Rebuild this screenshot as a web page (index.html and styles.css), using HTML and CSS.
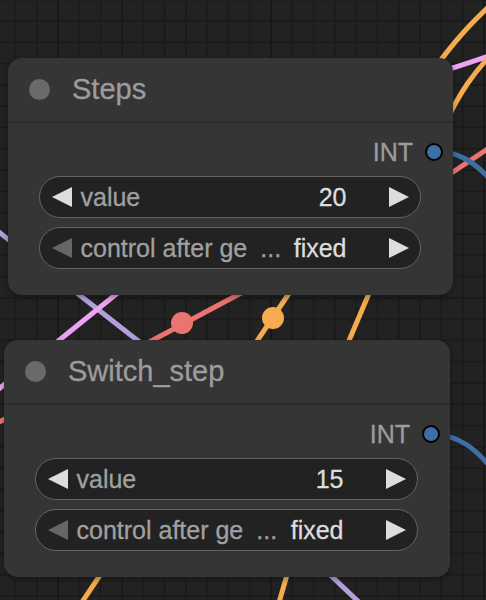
FILE: index.html
```html
<!DOCTYPE html>
<html lang="en">
<head>
    <meta charset="UTF-8">
    <meta name="viewport" content="width=device-width, initial-scale=1.0">
    <title>Steps</title>
    <link rel="stylesheet" href="styles.css">
</head>
<body>
    <div class="canvas">
        <!-- links between nodes -->
        <svg class="links" width="486" height="600" viewBox="0 0 486 600">
            <path class="link link-orange" d="M500 -4 C474 20, 454 40, 428 78"/>
            <path class="link link-pink" d="M440 72 C460 66, 474 61, 492 55"/>
            <path class="link link-orange" d="M494 52 C474 72, 460 92, 446 122"/>
            <path class="link link-red" d="M444 178 L492 146"/>
            <path class="link link-blue" d="M434 151 C458 151, 476 162, 496 186"/>
            <path class="link link-lavender" d="M-10 225 L160 358"/>
            <path class="link link-pink" d="M130 283 L-10 396"/>
            <path class="link link-red" d="M262 282 L-10 427"/>
            <circle class="dot-red" cx="182" cy="323" r="11"/>
            <path class="link link-orange" d="M300 277 L70 620"/>
            <circle class="dot-orange" cx="273" cy="318" r="11"/>
            <path class="link link-orange" d="M345 350 L373 284"/>
            <path class="link link-orange" d="M289 568 L278 606"/>
            <path class="link link-lavender" d="M325 570 L363 606"/>
            <path class="link link-blue" d="M430 434 C458 434, 476 448, 496 474"/>
        </svg>

        <!-- Steps -->
        <div class="node node-steps">
            <div class="node-title">
                <span class="title-dot"></span>
                <span class="title-text">Steps</span>
            </div>
            <div class="node-body">
                <div class="output-row">
                    <span class="slot-label">INT</span>
                    <span class="slot-dot"></span>
                </div>
                <div class="widget">
                    <span class="arrow arrow-left"></span>
                    <span class="w-label">value</span>
                    <span class="w-value">20</span>
                    <span class="arrow arrow-right"></span>
                </div>
                <div class="widget">
                    <span class="arrow arrow-left arrow-off"></span>
                    <span class="w-label">control after ge</span>
                    <span class="w-more">...</span>
                    <span class="w-value">fixed</span>
                    <span class="arrow arrow-right"></span>
                </div>
            </div>
        </div>

        <!-- Switch_step -->
        <div class="node node-switch">
            <div class="node-title">
                <span class="title-dot"></span>
                <span class="title-text">Switch_step</span>
            </div>
            <div class="node-body">
                <div class="output-row">
                    <span class="slot-label">INT</span>
                    <span class="slot-dot"></span>
                </div>
                <div class="widget">
                    <span class="arrow arrow-left"></span>
                    <span class="w-label">value</span>
                    <span class="w-value">15</span>
                    <span class="arrow arrow-right"></span>
                </div>
                <div class="widget">
                    <span class="arrow arrow-left arrow-off"></span>
                    <span class="w-label">control after ge</span>
                    <span class="w-more">...</span>
                    <span class="w-value">fixed</span>
                    <span class="arrow arrow-right"></span>
                </div>
            </div>
        </div>
    </div>
</body>
</html>
```

FILE: styles.css
```css
  body {
      margin: 0;
      padding: 0;
      background-color: #222222;
      font-family: 'Liberation Sans', Arial, Helvetica, sans-serif;
  }
  .canvas {
      position: relative;
      width: 486px;
      height: 600px;
      overflow: hidden;
      background-color: #222222;
      background-image:
          linear-gradient(90deg, #181818 2px, transparent 2px),
          linear-gradient(90deg, #1b1b1b 1.5px, transparent 1.5px),
          linear-gradient(#1b1b1b 1.5px, transparent 1.5px);
      background-size: 213px 100%, 21.3px 21.3px, 21.3px 21.3px;
      background-position: 57px 0, 14.5px 0, 0 20px;
  }

  /* links */
  .links {
      position: absolute;
      left: 0;
      top: 0;
  }
  .link {
      fill: none;
      stroke-width: 5;
  }
  .link-orange { stroke: #f4ac4c; }
  .link-pink { stroke: #eea2f2; }
  .link-lavender { stroke: #b39fdc; }
  .link-red { stroke: #ec7470; }
  .link-blue { stroke: #3d6fa6; }
  .dot-red { fill: #ec7470; }
  .dot-orange { fill: #f4ac4c; }

  /* nodes */
  .node {
      position: absolute;
      width: 445px;
      box-sizing: border-box;
      background-color: #353535;
      border-radius: 14px;
      box-shadow: 0 2px 6px rgba(0, 0, 0, 0.35);
      -webkit-text-stroke: 0.3px currentColor;
  }
  .node-steps {
      left: 8px;
      top: 58px;
  }
  .node-switch {
      left: 4px;
      top: 340px;
      width: 446px;
  }
  .node-title {
      height: 63px;
      display: flex;
      align-items: center;
      padding-left: 21px;
      border-bottom: 2px solid #2c2c2c;
  }
  .title-dot {
      width: 21px;
      height: 21px;
      border-radius: 50%;
      background-color: #6a6a6a;
  }
  .title-text {
      margin-left: 22px;
      font-size: 29px;
      color: #9c9c9c;
  }
  .node-body {
      padding: 8px 0 26px;
  }
  .output-row {
      height: 42px;
      display: flex;
      align-items: center;
      justify-content: flex-end;
      padding-right: 10px;
  }
  .slot-label {
      font-size: 25px;
      color: #9c9c9c;
      margin-right: 12px;
  }
  .slot-dot {
      width: 14px;
      height: 14px;
      border-radius: 50%;
      border: 2px solid #000000;
      background-color: #3d6fa6;
  }

  /* widgets */
  .widget {
      height: 42px;
      margin: 3px 32px 0 31px;
      box-sizing: border-box;
      display: flex;
      align-items: center;
      padding: 0 11.5px;
      background-color: #222222;
      border: 1.5px solid #636363;
      border-radius: 21px;
      font-size: 25px;
  }
  .widget + .widget {
      margin-top: 9px;
  }
  .arrow {
      width: 0;
      height: 0;
      border-top: 10.5px solid transparent;
      border-bottom: 10.5px solid transparent;
  }
  .arrow-left {
      border-right: 20px solid #dddddd;
  }
  .arrow-right {
      border-left: 20px solid #dddddd;
  }
  .arrow-off {
      border-right-color: #666666;
  }
  .w-label {
      margin-left: 9px;
      color: #a0a0a0;
  }
  .w-more {
      margin-left: 13px;
      color: #a0a0a0;
  }
  .w-value {
      margin-left: auto;
      margin-right: 42px;
      color: #dddddd;
  }
```
